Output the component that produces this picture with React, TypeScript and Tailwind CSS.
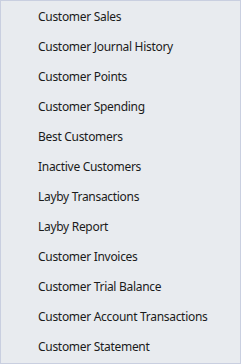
import React from 'react';

const ITEMS = [
  'Customer Sales',
  'Customer Journal History',
  'Customer Points',
  'Customer Spending',
  'Best Customers',
  'Inactive Customers',
  'Layby Transactions',
  'Layby Report',
  'Customer Invoices',
  'Customer Trial Balance',
  'Customer Account Transactions',
  'Customer Statement',
];

export default function App() {
  return (
    <div className="w-[241px] h-[364px] bg-[#e8ebef] border border-[#c9cfe0] py-px" style={{ fontFamily: '"Noto Sans", sans-serif' }}>
      <ul className="flex flex-col">
        {ITEMS.map((item) => (
          <li key={item} className="h-[30px] flex items-center pl-[37px] text-[12px] tracking-[-0.3px] text-[#1b1b1b]">
            {item}
          </li>
        ))}
      </ul>
    </div>
  );
}
